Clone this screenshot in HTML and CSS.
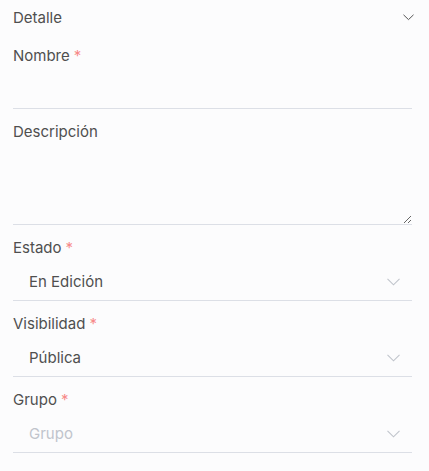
FILE: index.html
```html
<!DOCTYPE html>
<html lang="es">

<head>
    <meta charset="UTF-8">
    <meta name="viewport" content="width=device-width, initial-scale=1.0">
    <title>Detalle</title>
    <link rel="stylesheet" href="styles.css">
</head>

<body>
    <div class="panel">
        <div class="panel-head">
            <span>Detalle</span>
            <svg class="head-arrow" width="11" height="7" viewBox="0 0 11 7">
                <path d="M0.5 0.8 L5.5 5.6 L10.5 0.8" fill="none" stroke="#555" stroke-width="1" />
            </svg>
        </div>
        <div class="form">
            <div class="item">
                <label class="label req">Nombre</label>
                <input class="input" type="text">
            </div>
            <div class="item">
                <label class="label">Descripción</label>
                <textarea class="textarea"></textarea>
            </div>
            <div class="item">
                <label class="label req">Estado</label>
                <div class="select">
                    <span>En Edición</span>
                    <svg width="13" height="8" viewBox="0 0 13 8">
                        <path d="M0.5 0.8 L6.5 6.8 L12.5 0.8" fill="none" stroke="#c0c4cc" stroke-width="1.1" />
                    </svg>
                </div>
            </div>
            <div class="item">
                <label class="label req">Visibilidad</label>
                <div class="select">
                    <span>Pública</span>
                    <svg width="13" height="8" viewBox="0 0 13 8">
                        <path d="M0.5 0.8 L6.5 6.8 L12.5 0.8" fill="none" stroke="#c0c4cc" stroke-width="1.1" />
                    </svg>
                </div>
            </div>
            <div class="item">
                <label class="label req">Grupo</label>
                <div class="select">
                    <span class="placeholder">Grupo</span>
                    <svg width="13" height="8" viewBox="0 0 13 8">
                        <path d="M0.5 0.8 L6.5 6.8 L12.5 0.8" fill="none" stroke="#c0c4cc" stroke-width="1.1" />
                    </svg>
                </div>
            </div>
        </div>
    </div>
</body>

</html>
```

FILE: styles.css
```css
* {
    margin: 0;
    padding: 0;
    box-sizing: border-box;
}

body {
    background: #fcfcfd;
    font-family: Inter, "Noto Sans", sans-serif;
    font-size: 15px;
    color: #4f4f4f;
}

.panel {
    padding: 0 15px 0 13px;
}

.panel-head {
    height: 34px;
    display: flex;
    align-items: center;
    justify-content: space-between;
}

.form {
    padding: 10px 2px 0 0;
    display: flex;
    flex-direction: column;
    gap: 11px;
}

.label {
    display: block;
    line-height: 24px;
}

/* campo obligatorio */
.req::after {
    content: '*';
    color: #f78989;
    margin-left: 4px;
}

.input,
.textarea {
    display: block;
    width: 100%;
    border: 0;
    border-bottom: 1px solid #dcdfe6;
    background: transparent;
    font: inherit;
    color: inherit;
    outline: none;
}

.input {
    height: 41px;
}

.textarea {
    height: 81px;
    resize: vertical;
}

.select {
    height: 41px;
    border-bottom: 1px solid #dcdfe6;
    display: flex;
    align-items: center;
    justify-content: space-between;
    padding: 3px 12px 0 16px;
}

.placeholder {
    color: #c0c4cc;
}
```
